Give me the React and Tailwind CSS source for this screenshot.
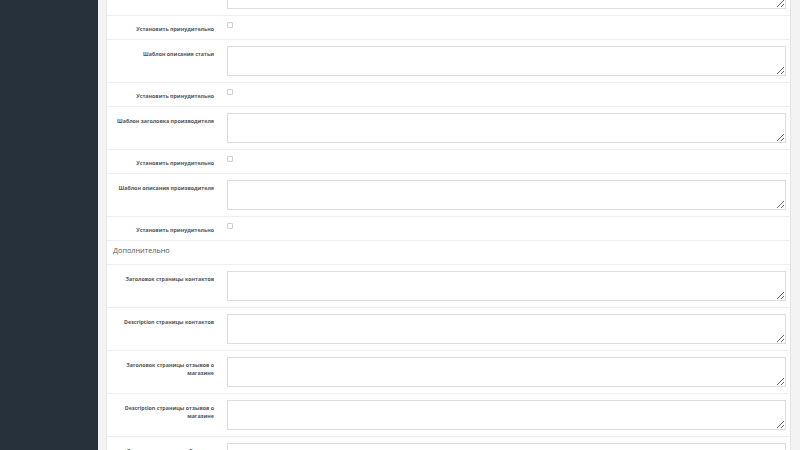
import React from "react";

const font = { fontFamily: '"Open Sans", "Noto Sans", sans-serif' };

function Label({ children, pt }) {
  return (
    <div
      className={`w-[107px] shrink-0 pl-[4px] text-right text-[5.3px] leading-[7.5px] font-bold text-[#555555] ${pt}`}
    >
      {children}
    </div>
  );
}

function TextRow({ label, first }) {
  return (
    <div className={`flex shrink-0 border-b border-[#eeeeee] pt-[6px] pb-[6px] pr-[4px] ${first ? "-mt-[27px]" : ""}`}>
      <Label pt="pt-[5px]">{label}</Label>
      <div className="ml-[13px] flex-1">
        <textarea className="block h-[30px] w-full resize-y border border-[#dcdcdc] bg-white outline-none" />
      </div>
    </div>
  );
}

function CheckRow() {
  return (
    <div className="flex h-[24px] shrink-0 border-b border-[#eeeeee]">
      <Label pt="pt-[10px]">Установить принудительно</Label>
      <div className="ml-[13px] flex-1 pt-[6px]">
        <input
          type="checkbox"
          className="block h-[6px] w-[6px] appearance-none rounded-[1px] border border-[#cfcfcf] bg-white"
        />
      </div>
    </div>
  );
}

export default function App() {
  return (
    <div className="flex h-[450px] w-[800px] overflow-hidden" style={font}>
      <div className="h-full w-[98px] shrink-0 bg-[#27313b]" />
      <div className="h-full flex-1 overflow-hidden bg-[#f3f3f3] pl-[8px] pr-[9px]">
        <div className="flex h-full flex-col border-x border-[#e4e4e4] bg-white">
          <TextRow label="" first />
          <CheckRow />
          <TextRow label="Шаблон описания статьи" />
          <CheckRow />
          <TextRow label="Шаблон заголовка производителя" />
          <CheckRow />
          <TextRow label="Шаблон описания производителя" />
          <CheckRow />
          <div className="flex h-[24px] shrink-0 items-center border-b border-[#eeeeee] px-[6px] pb-[4px] text-[7.3px] text-[#555555]">
            Дополнительно
          </div>
          <TextRow label="Заголовок страницы контактов" />
          <TextRow label="Description страницы контактов" />
          <TextRow label="Заголовок страницы отзывов о магазине" />
          <TextRow label="Description страницы отзывов о магазине" />
          <TextRow label="Заголовок страницы «Бренды»" />
        </div>
      </div>
    </div>
  );
}
